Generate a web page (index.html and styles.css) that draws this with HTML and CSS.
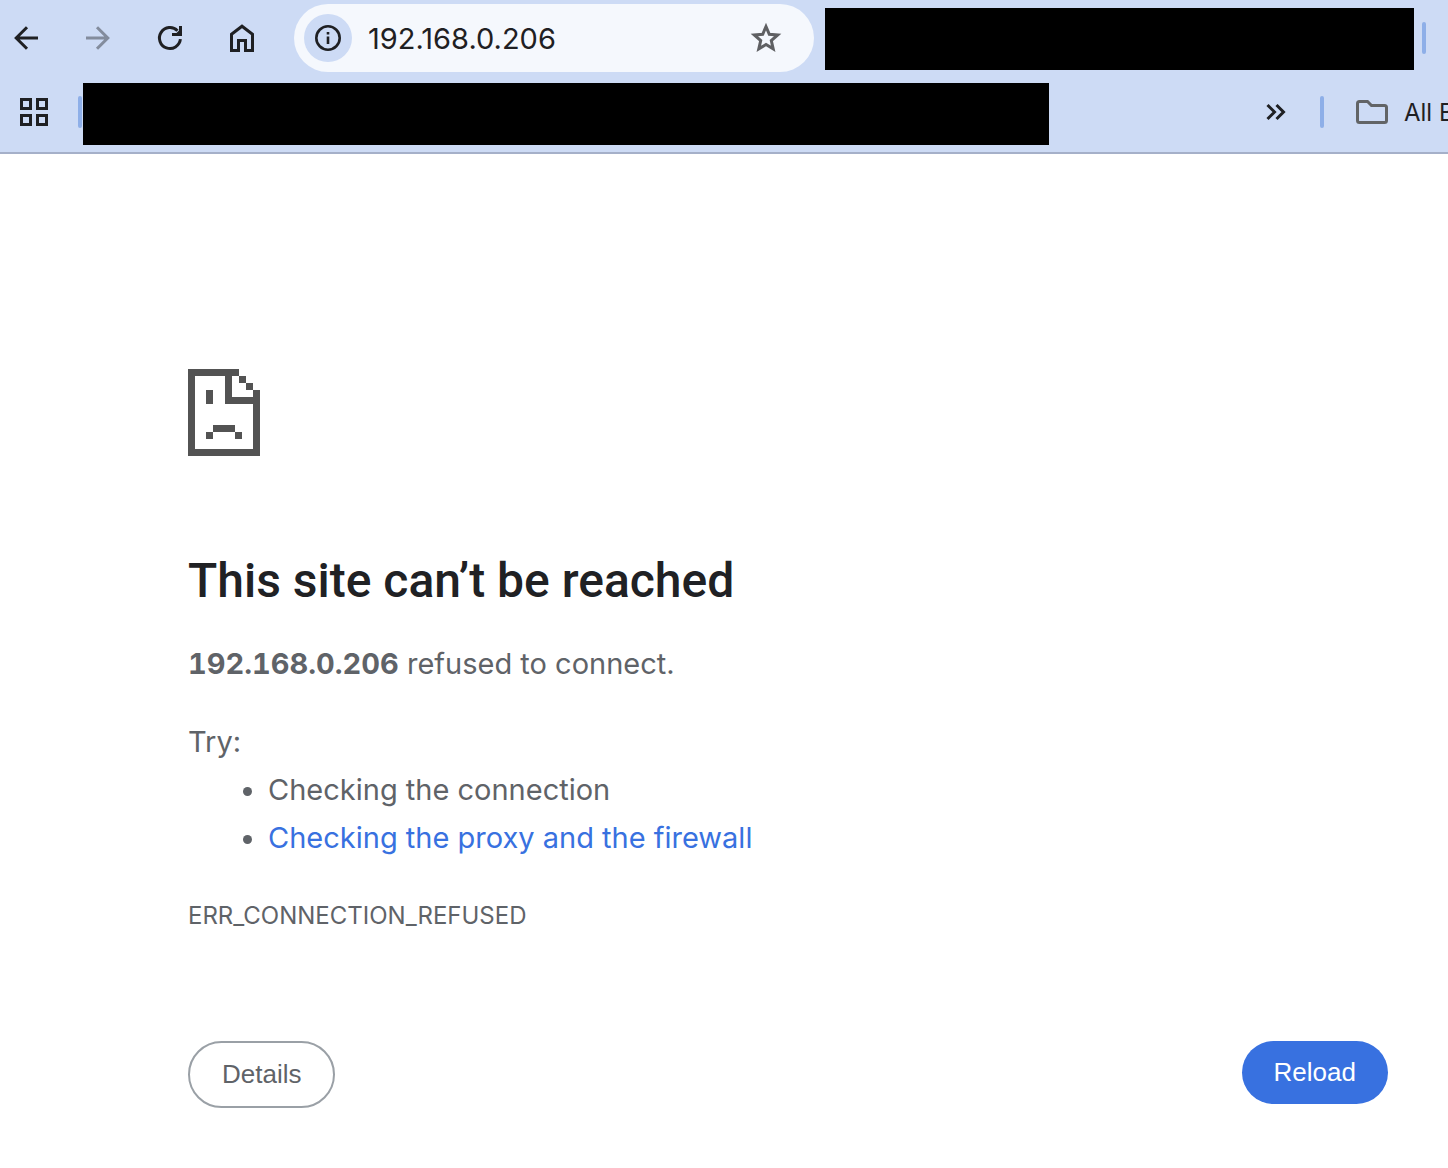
FILE: index.html
```html
<!DOCTYPE html>
<html lang="en">
<head>
    <meta charset="UTF-8">
    <meta name="viewport" content="width=device-width, initial-scale=1.0">
    <title>192.168.0.206</title>
    <link rel="stylesheet" href="styles.css">
</head>
<body>
    <header class="browser-bar">
        <!-- Navigation row -->
        <div class="toolbar">
            <nav class="nav-buttons">
                <button type="button" class="icon-button" aria-label="Back">
                    <svg width="28" height="28" viewBox="0 0 28 28" fill="none" stroke="currentColor" stroke-width="3"><path d="M26 14H4.500M15 3.200L4.200 14 15 24.800"/></svg>
                </button>
                <button type="button" class="icon-button" aria-label="Forward" disabled>
                    <svg width="28" height="28" viewBox="0 0 28 28" fill="none" stroke="currentColor" stroke-width="3"><path d="M2 14h21.500M13 3.200L23.800 14 13 24.800"/></svg>
                </button>
                <button type="button" class="icon-button" aria-label="Reload page">
                    <svg width="28" height="28" viewBox="0 0 28 28" fill="none" stroke="currentColor" stroke-width="3"><path d="M24.400 15.200A10.500 10.500 0 1 1 21.500 6.700"/><path d="M26 2v10H16V9h4.500L23 6.500V2z" fill="currentColor" stroke="none"/></svg>
                </button>
                <button type="button" class="icon-button" aria-label="Home">
                    <svg width="28" height="28" viewBox="0 0 28 28" fill="none" stroke="currentColor" stroke-width="3"><path d="M3.500 10.200L14 2.200l10.500 8v16.300h-7V16.500h-7v10h-7z"/></svg>
                </button>
            </nav>
            <div class="address-bar">
                <button type="button" class="site-info" aria-label="View site information">
                    <svg width="28" height="28" viewBox="0 0 28 28" fill="none" stroke="currentColor"><circle cx="14" cy="14" r="11.700" stroke-width="2.600"/><path d="M14 12.500v7.500M14 8v2.600" stroke-width="2.600"/></svg>
                </button>
                <input type="text" class="address-input" value="192.168.0.206" aria-label="Address">
                <button type="button" class="bookmark-button" aria-label="Bookmark this page">
                    <svg width="32" height="32" viewBox="0 0 32 32" fill="none" stroke="currentColor" stroke-width="3"><path d="M16 4.500l3.300 7.800 8.400.7-6.400 5.600 1.900 8.200L16 22.500l-7.200 4.300 1.900-8.200L4.300 13l8.400-.7z"/></svg>
                </button>
            </div>
            <div class="blackout blackout-top"></div>
            <span class="divider"></span>
        </div>

        <!-- Bookmarks row -->
        <div class="bookmarks">
            <button type="button" class="apps-button" aria-label="Apps">
                <svg width="28" height="28" viewBox="0 0 28 28" fill="none" stroke="currentColor" stroke-width="3"><path d="M1.500 1.500h9v9h-9zM17.500 1.500h9v9h-9zM1.500 17.500h9v9h-9zM17.500 17.500h9v9h-9z"/></svg>
            </button>
            <span class="divider"></span>
            <div class="blackout blackout-bookmarks"></div>
            <button type="button" class="more-button" aria-label="More bookmarks">
                <svg width="20" height="18" viewBox="0 0 20 18" fill="none" stroke="currentColor" stroke-width="3"><path d="M1.500 2l7 7-7 7M10.500 2l7 7-7 7"/></svg>
            </button>
            <span class="divider"></span>
            <button type="button" class="all-bookmarks">
                <svg width="32" height="24" viewBox="0 0 32 24" fill="none" stroke="currentColor" stroke-width="3"><path d="M3.500 1.500h8l4 4h13q2 0 2 2v13q0 2-2 2h-25q-2 0-2-2v-17q0-2 2-2z"/></svg>
                <span>All Bookmarks</span>
            </button>
        </div>
    </header>

    <main class="error-page">
        <svg class="error-icon" width="72" height="87" viewBox="0 0 72 87" fill="currentColor" shape-rendering="crispEdges" aria-hidden="true">
            <path d="M0 0h51v7H0zM0 0h7v87H0zM0 80h72v7H0zM65 21h7v66h-7zM37 0h7v35h-7zM37 28h35v7H37zM51 7h7v7h-7zM58 14h7v7h-7z"/>
            <path d="M18 21h7v14h-7zM25 56h22v7H25zM18 63h7v7h-7zM47 63h7v7h-7z"/>
        </svg>
        <h1>This site can’t be reached</h1>
        <p><strong>192.168.0.206</strong> refused to connect.</p>
        <div class="suggestions">
            <p>Try:</p>
            <ul>
                <li>Checking the connection</li>
                <li><a href="#buttons">Checking the proxy and the firewall</a></li>
            </ul>
        </div>
        <div class="error-code">ERR_CONNECTION_REFUSED</div>
        <div class="button-container" id="buttons">
            <button type="button" class="details-button">Details</button>
            <button type="button" class="reload-button" onclick="window.location.reload();">Reload</button>
        </div>
    </main>
</body>
</html>
```
FILE: styles.css
```css
* {
    box-sizing: border-box;
}
body {
    font-family: Inter, "Liberation Sans", sans-serif;
    background-color: white;
    margin: 0;
    color: #5f6368;
    overflow-x: hidden;
}
button {
    padding: 0;
    border: none;
    background: none;
    color: #1f2023;
    font-family: inherit;
    cursor: pointer;
}
svg {
    display: block;
    flex: none;
}

/* Browser bar */
.browser-bar {
    background-color: #cddbf5;
    border-bottom: 2px solid #a5b0c9;
    padding-bottom: 4px;
}
.toolbar,
.bookmarks {
    display: flex;
    align-items: center;
}
.toolbar {
    height: 76px;
    padding: 0 22px 0 2px;
}
.nav-buttons {
    display: flex;
    gap: 24px;
    margin-right: 28px;
}
.icon-button {
    display: flex;
    justify-content: center;
    align-items: center;
    width: 48px;
    height: 48px;
}
.icon-button:disabled {
    color: #838c9d;
}
.address-bar {
    display: flex;
    align-items: center;
    width: 520px;
    height: 68px;
    padding: 0 32px 0 10px;
    border-radius: 34px;
    background-color: #f5f8fd;
}
.site-info {
    display: flex;
    justify-content: center;
    align-items: center;
    width: 48px;
    height: 48px;
    border-radius: 50%;
    background-color: #cddbf5;
}
.address-input {
    flex: 1;
    min-width: 0;
    padding: 0 16px;
    border: none;
    outline: none;
    background: none;
    color: #1f2023;
    font-family: inherit;
    font-size: 29px;
}
.bookmark-button {
    color: #5f6063;
}
.blackout {
    flex: 1;
    height: 62px;
    background-color: black;
}
.blackout-top {
    margin: 2px 8px 0 11px;
}
.divider {
    width: 4px;
    height: 32px;
    border-radius: 2px;
    background-color: #8eafe8;
}
.bookmarks {
    height: 72px;
    padding-left: 20px;
}
.apps-button {
    margin-right: 30px;
}
.blackout-bookmarks {
    margin: 4px 217px 0 1px;
}
.more-button {
    margin-right: 34px;
}
.all-bookmarks {
    display: flex;
    align-items: center;
    gap: 16px;
    width: 92px;
    margin-left: 32px;
    overflow: hidden;
    font-size: 24px;
    white-space: nowrap;
}
.all-bookmarks svg {
    color: #626466;
}

/* Error page */
.error-page {
    padding: 215px 60px 60px 188px;
    font-size: 29px;
    line-height: 48px;
}
.error-icon {
    color: #535353;
    margin-bottom: 96px;
}
h1 {
    margin: 0 0 30px;
    color: #202124;
    font-family: Roboto, Inter, sans-serif;
    font-size: 48px;
    font-weight: 500;
    line-height: 58px;
}
p {
    margin: 0;
}
strong {
    font-variant-numeric: tabular-nums;
}
.suggestions {
    margin-top: 30px;
}
.suggestions ul {
    margin: 0;
    padding-left: 80px;
}
.suggestions a {
    color: #3871e0;
    text-decoration: none;
}
.error-code {
    margin-top: 30px;
    font-size: 24px;
}
.button-container {
    display: flex;
    justify-content: space-between;
    align-items: flex-start;
    margin-top: 101px;
}
.details-button,
.reload-button {
    padding: 16px 32px;
    border-radius: 34px;
    font-family: "Liberation Sans", Arial, sans-serif;
    font-size: 26px;
    line-height: 31px;
}
.details-button {
    border: 2px solid #9aa0a6;
    color: #5f6368;
}
.reload-button {
    background-color: #3871e0;
    color: white;
}
```
